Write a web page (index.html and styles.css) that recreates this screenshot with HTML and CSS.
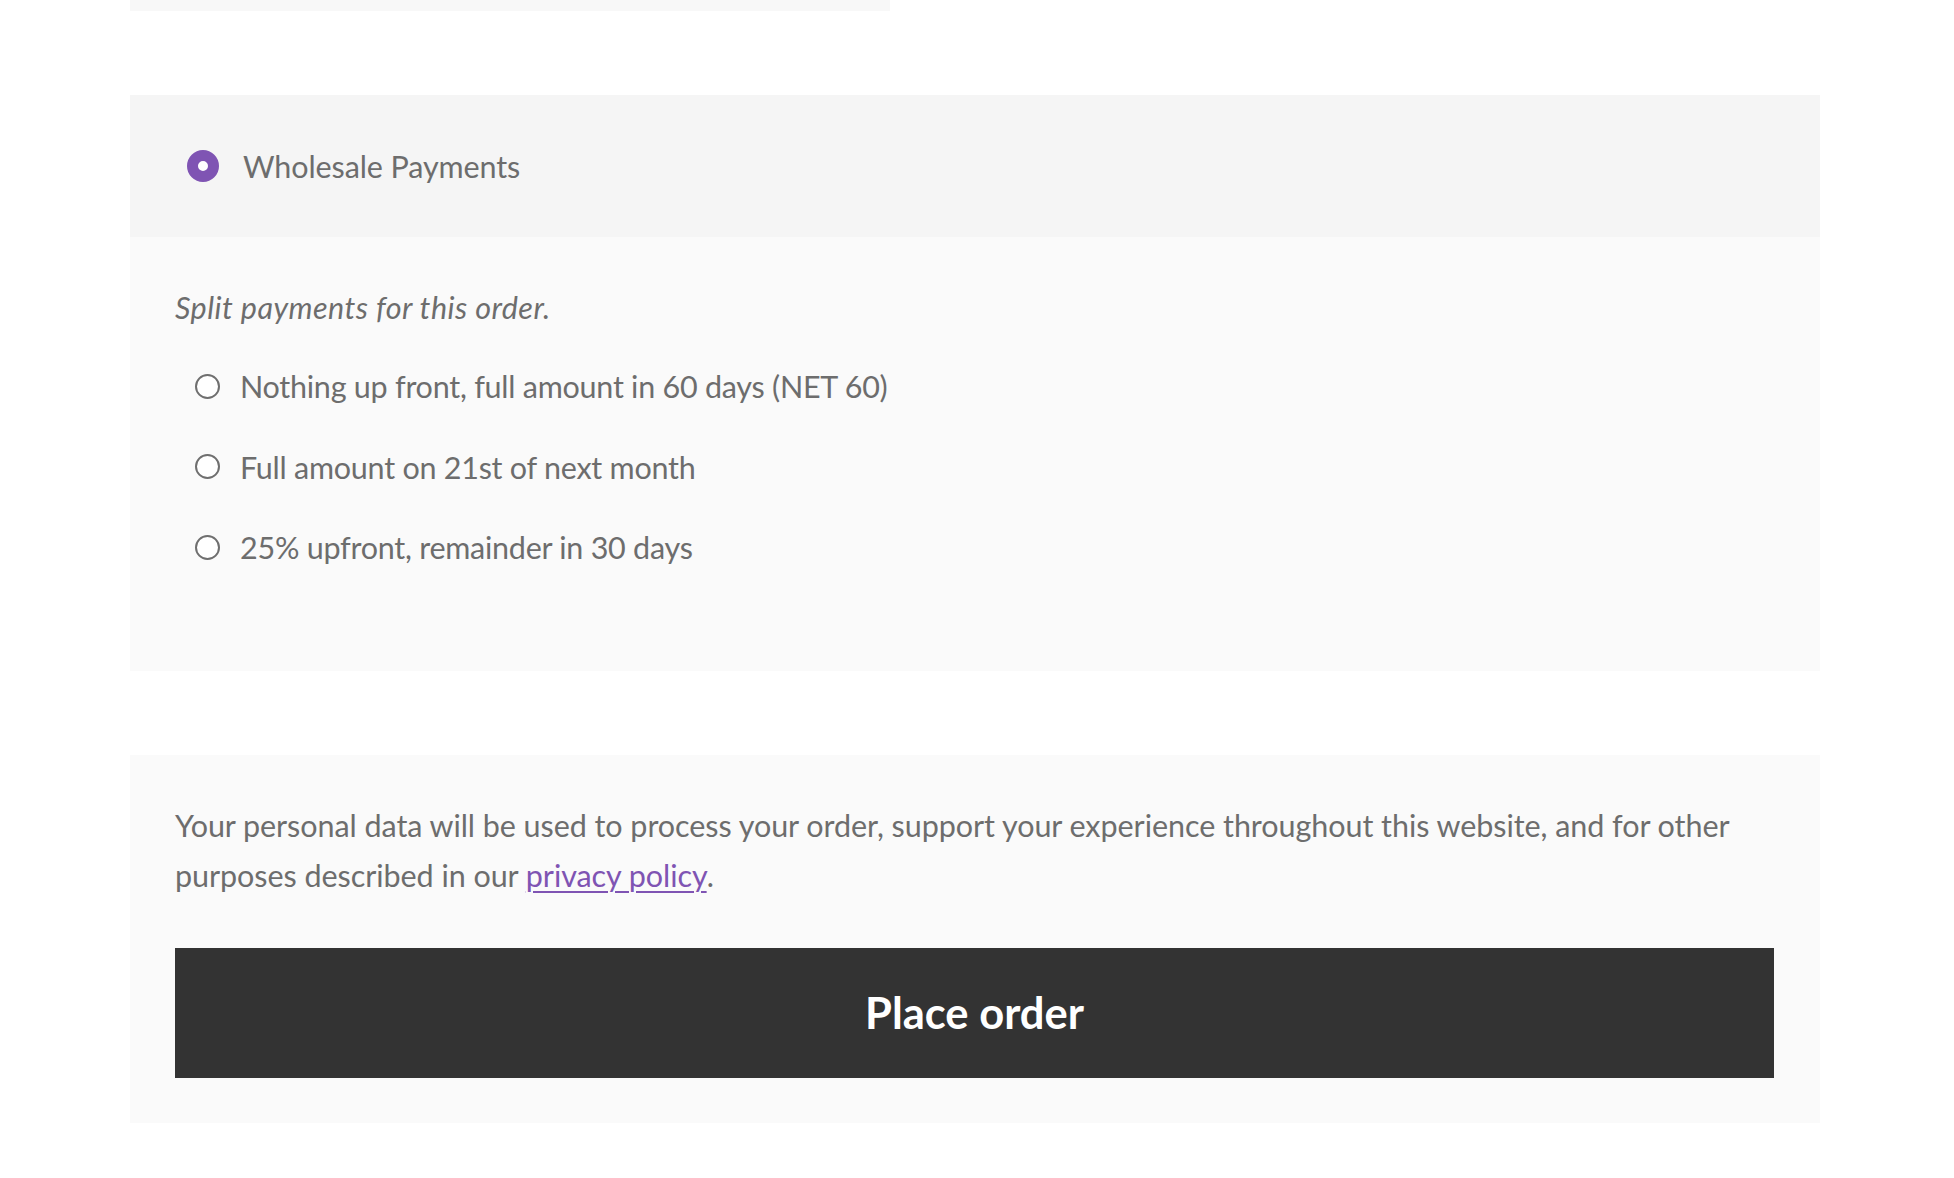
FILE: index.html
```html
<!DOCTYPE html>
<html>
<head>
<meta charset="utf-8">
<title>Checkout</title>
<link rel="stylesheet" href="styles.css">
</head>
<body>
<div class="top-bar"></div>

<div class="payment">
  <div class="method-header">
    <span class="radio radio-checked"></span>
    <span class="method-label">Wholesale Payments</span>
  </div>
  <div class="method-body">
    <p class="method-desc">Split payments for this order.</p>
    <ul class="plan-list">
      <li class="plan"><span class="radio radio-empty"></span><span>Nothing up front, full amount in 60 days (NET 60)</span></li>
      <li class="plan"><span class="radio radio-empty"></span><span>Full amount on 21st of next month</span></li>
      <li class="plan"><span class="radio radio-empty"></span><span>25% upfront, remainder in 30 days</span></li>
    </ul>
  </div>
</div>

<div class="place-order">
  <p class="privacy">Your personal data will be used to process your order, support your experience throughout this website, and for other purposes described in our <a href="#" class="privacy-link">privacy policy</a>.</p>
  <button class="order-btn" type="button">Place order</button>
</div>
</body>
</html>
```
FILE: styles.css
```css
* { box-sizing: border-box; }

body {
  margin: 0;
  background: #ffffff;
  font-family: Lato, "Open Sans", sans-serif;
  font-size: 30.5px;
  line-height: 50px;
  color: #6d6d6d;
}

.top-bar {
  margin-left: 130px;
  width: 760px;
  height: 11px;
  background: #f8f8f8;
}

.payment {
  margin: 84px 0 0 130px;
  width: 1690px;
}

.method-header {
  height: 142px;
  background: #f5f5f5;
  display: flex;
  align-items: center;
  padding-left: 57px;
  gap: 24px;
}

.method-label {
  letter-spacing: -0.1px;
}

.radio {
  display: inline-block;
  flex: none;
  border-radius: 50%;
}

.radio-checked {
  width: 32px;
  height: 32px;
  background: #ffffff;
  border: 11px solid #7f54b3;
}

.method-body {
  background: #fafafa;
  padding: 45px 45px 99px 45px;
}

.method-desc {
  margin: 0;
  font-style: italic;
  letter-spacing: 0.45px;
}

.plan-list {
  list-style: none;
  margin: 29px 0 0 0;
  padding: 0 0 0 20px;
  display: flex;
  flex-direction: column;
  gap: 30.5px;
}

.plan {
  display: flex;
  align-items: center;
  gap: 20px;
  height: 50px;
  letter-spacing: -0.25px;
}

.radio-empty {
  width: 25px;
  height: 25px;
  background: #ffffff;
  border: 2px solid #6f6f6f;
}

.place-order {
  margin: 84px 0 0 130px;
  width: 1690px;
  background: #fafafa;
  padding: 45px 46px 45px 45px;
}

.privacy {
  margin: 0;
  letter-spacing: -0.05px;
}

.privacy-link {
  color: #7f54b3;
  text-decoration: underline;
  text-underline-offset: 4px;
  text-decoration-thickness: 2px;
}

.order-btn {
  display: block;
  width: 100%;
  height: 130px;
  margin-top: 48px;
  border: 0;
  border-radius: 0;
  background: #333333;
  color: #ffffff;
  font-family: Lato, "Open Sans", sans-serif;
  font-weight: 700;
  font-size: 43.5px;
  line-height: 1;
  padding: 0;
  cursor: pointer;
}
```
